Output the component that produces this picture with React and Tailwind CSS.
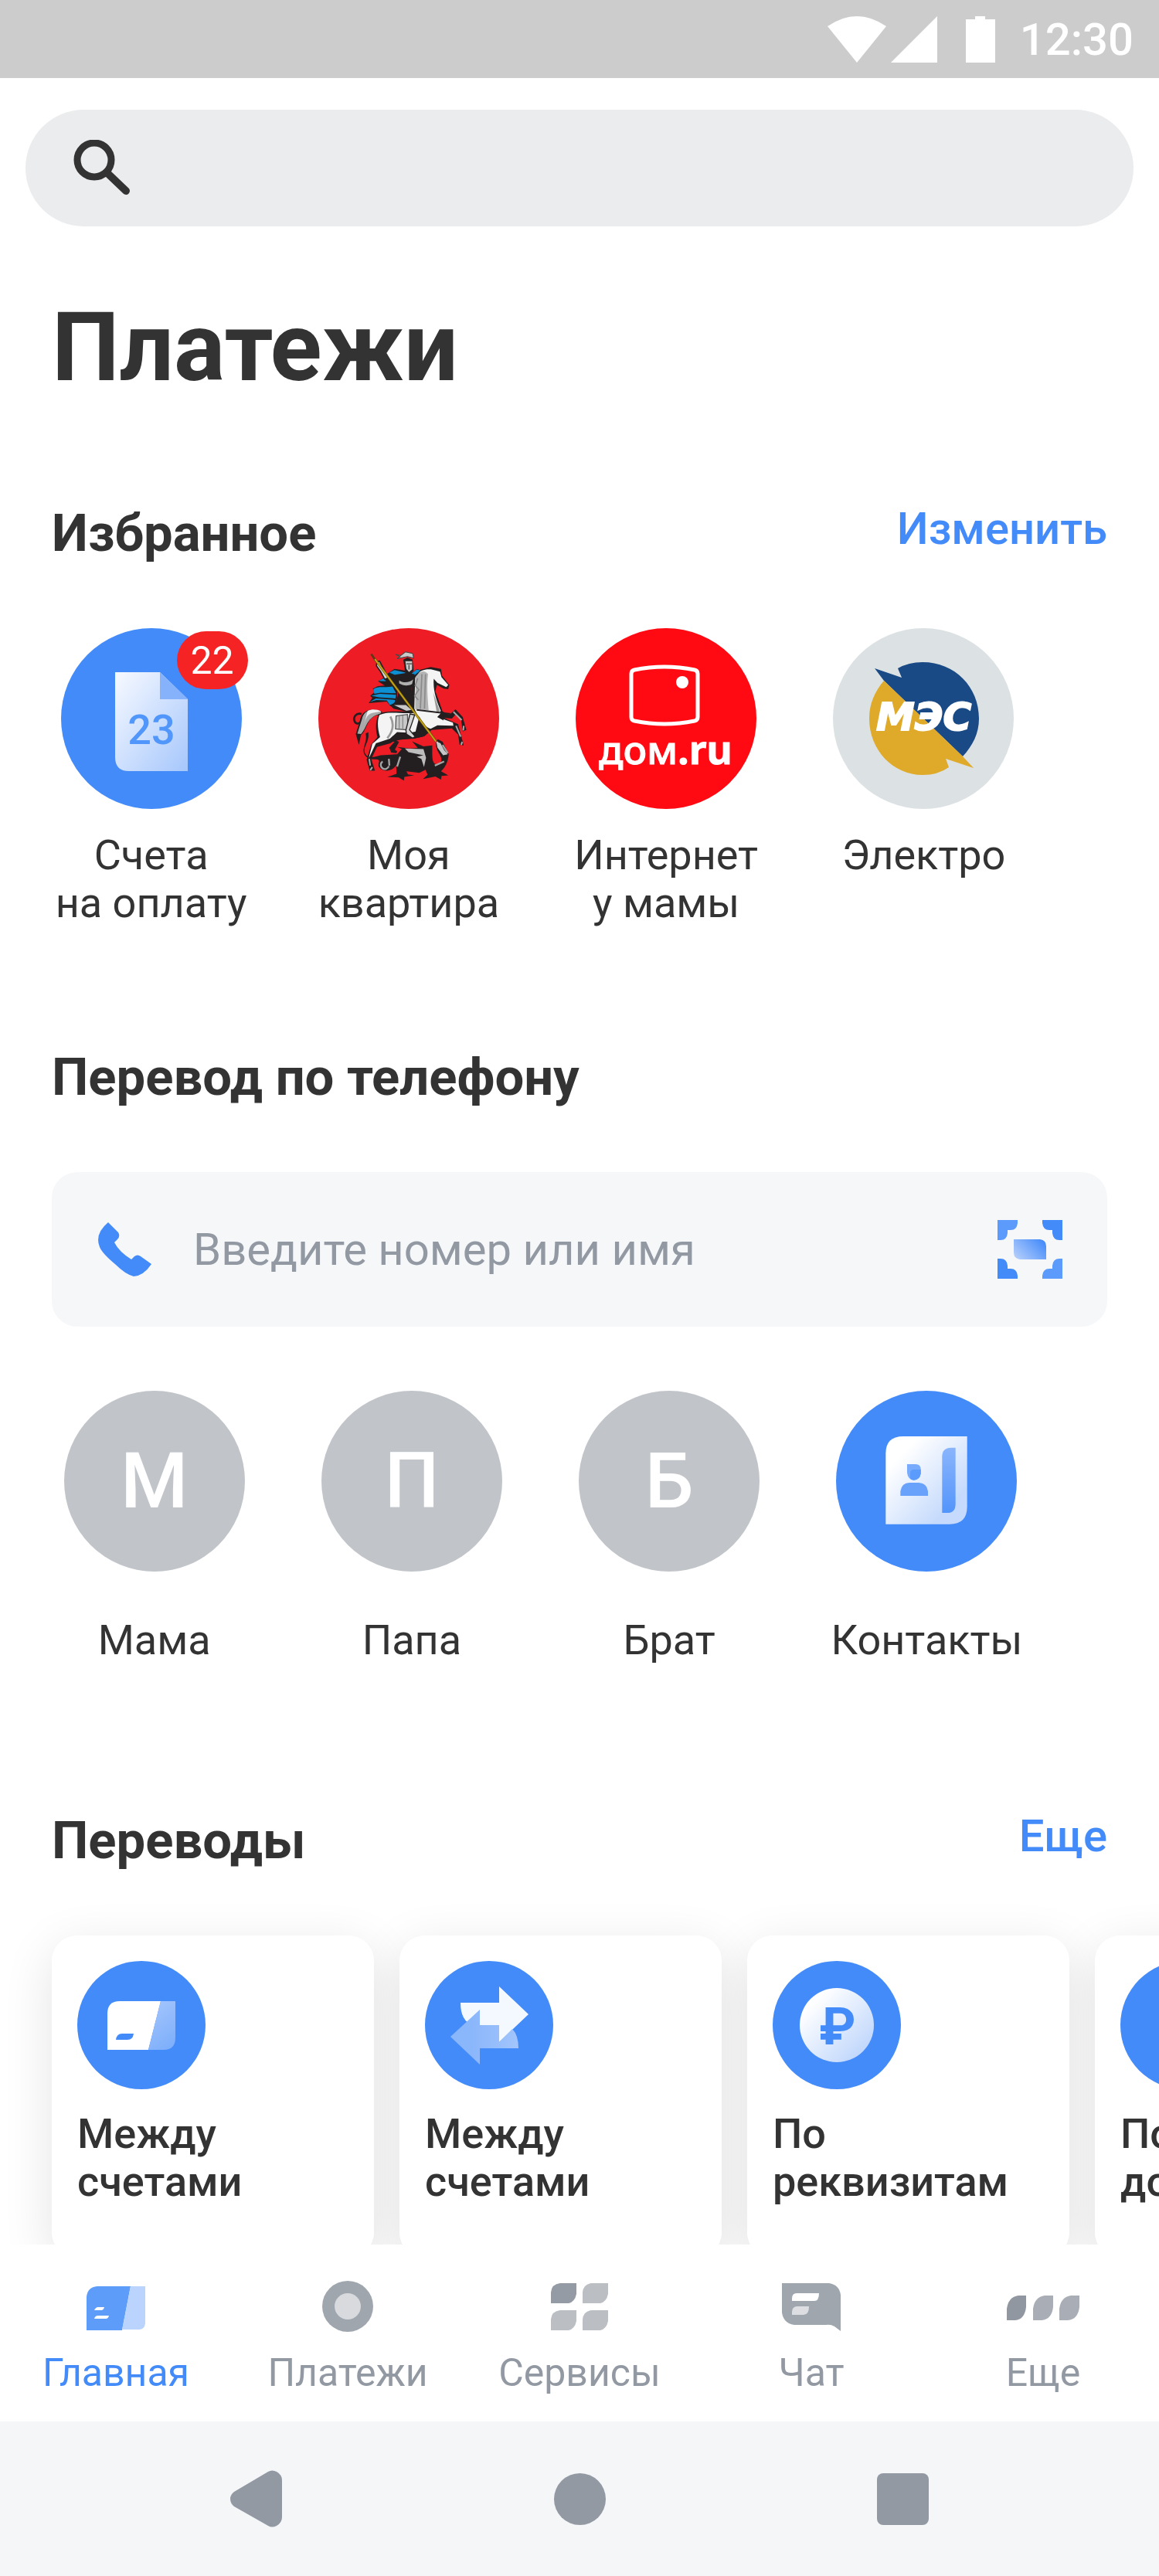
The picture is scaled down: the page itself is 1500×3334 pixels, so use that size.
import React from 'react';

// Цветной круг с иконкой внутри
function Circle({ className, children }) {
  return (
    <span className={`relative flex size-[234px] items-center justify-center rounded-full ${className}`}>
      {children}
    </span>
  );
}

function BillsIcon() {
  return (
    <svg className="size-full" viewBox="0 0 234 234" aria-hidden="true">
      <defs>
        <linearGradient id="bill" x1="0" y1="0" x2="1" y2="1">
          <stop offset="0.05" stopColor="#f3f7ff" />
          <stop offset="1" stopColor="#a6c7fc" />
        </linearGradient>
      </defs>
      <path d="M70 57H128L164 92V185H88Q70 185 70 167Z" fill="url(#bill)" />
      <path d="M128 57L164 92H128Z" fill="#86b2fb" />
      <text x="117" y="150" textAnchor="middle" className="fill-[#5196fb] font-['Roboto',sans-serif] text-[54px] font-medium">23</text>
    </svg>
  );
}

// Герб Москвы
function MoscowIcon() {
  return (
    <svg className="size-full" viewBox="39 68 700 700" aria-hidden="true">
      {/* змей */}
      <path d="M232 470C240 510 205 530 222 556C232 574 262 566 280 560L344 556L362 536L345 528L392 534L424 532L402 506L446 526L480 522C480 560 478 588 492 594C512 596 524 580 508 556C492 530 490 512 502 498L520 508L544 556C540 590 530 606 514 622L542 638L516 640L514 654L492 642L444 652L462 636L454 616L430 628L380 622L386 634L410 638L372 644L370 658L350 646L306 644L342 632L340 600C318 630 276 622 272 600C272 584 282 578 262 576C228 578 212 560 214 538C218 514 228 500 222 476Z" fill="#231f20" />
      <path d="M374 534L446 536L456 570L448 606L438 574L420 566L446 560L388 548Z" fill="#bdbdbd" />
      <path d="M356 566L344 604M312 574L314 600M288 584A16 16 0 1 0 312 602M520 520L540 552M498 508L512 536M490 600L526 584" fill="none" stroke="#a5a5a5" strokeWidth="7" />
      <path d="M496 506L512 514L526 540L540 556L522 560L500 530Z" fill="#c7c7c7" />
      {/* хвост и задние ноги */}
      <path d="M206 400C186 394 172 412 180 430C186 440 198 440 202 430" fill="none" stroke="#231f20" strokeWidth="8" />
      <path d="M286 392C240 372 206 388 200 426L184 478L196 520L204 482C230 462 226 400 286 404Z" fill="#231f20" />
      <path d="M282 391C240 377 214 390 208 420L190 476L204 478C228 454 224 410 282 399Z" fill="#a9a9a9" />
      <path d="M230 388C246 380 266 382 282 390L248 396C228 400 222 420 216 440Z" fill="#f2f2f2" />
      <path d="M324 498L346 510L330 540L342 548L324 546L318 532L336 512" fill="#231f20" stroke="#231f20" strokeWidth="8" />
      {/* корпус коня */}
      <path d="M272 402C300 384 350 394 396 388L400 300C398 262 410 232 446 226L474 218L514 226L518 252L546 288L542 304L524 302L498 288L492 312L520 390L546 404L570 382L598 412L612 462L598 468L592 424L572 400L556 418L526 416L580 440L602 522L586 520L580 480L556 456L478 462L450 486C400 502 344 492 318 514L266 528L244 574L258 620L238 620L226 578L244 518L268 490C258 456 262 424 272 402Z" fill="#231f20" />
      <path d="M276 404C310 388 350 400 410 396L414 260C424 232 452 226 478 228L510 236L516 258L542 288L534 296L500 280L486 264C482 306 496 350 516 394L500 412L560 434L562 446L500 444L474 458C452 452 436 428 430 410L414 474L344 470L316 496L262 514L244 552L234 572L248 516L278 490C266 450 268 420 276 404Z" fill="#f4f4f4" />
      <path d="M416 250C440 230 452 232 464 246C458 280 462 340 466 386L414 382Z" fill="#b4b4b4" />
      <path d="M424 262L414 290L428 306L412 330L426 346M440 246L434 380M454 246L450 380" fill="none" stroke="#8a8a8a" strokeWidth="5" />
      <path d="M484 318L510 390L498 398Z" fill="#9a9a9a" />
      <path d="M514 388L520 420L502 410M420 384L550 400" fill="none" stroke="#231f20" strokeWidth="6" />
      <path d="M340 408L384 402L386 462L338 458Z" fill="#c9c9c9" stroke="#555" strokeWidth="4" />
      <path d="M352 408V456M366 406V458" stroke="#8a8a8a" strokeWidth="4" />
      <path d="M318 410C334 440 326 470 306 494" fill="none" stroke="#9a9a9a" strokeWidth="8" />
      <path d="M340 476C380 480 420 464 462 462L450 486L410 496L330 500Z" fill="#231f20" />
      <path d="M236 574L240 600M248 606L240 618M562 392L594 424M602 446L600 464M572 446L590 488M596 508L592 520" fill="none" stroke="#a9a9a9" strokeWidth="6" />
      {/* плащ */}
      <path d="M312 240L334 226L374 232L408 238L420 226L436 232L412 260L380 256L350 260L342 362L318 370L304 352L234 358L248 338L240 330L256 316L250 302L270 292L296 290L270 274L290 262Z" fill="#231f20" />
      <path d="M314 240L334 230L376 240L372 250L338 250Z" fill="#0d8fd4" />
      <path d="M400 244L420 228L434 232L412 250Z" fill="#0d8fd4" />
      <path d="M272 272L294 262L300 274Z" fill="#0d8fd4" />
      <path d="M252 304C272 290 300 300 326 294L340 320L280 318L256 322Z" fill="#0d8fd4" />
      <path d="M244 330L276 322L340 326L338 340L274 336Z" fill="#0d8fd4" />
      <path d="M238 354L262 340L336 346L334 358L316 366L304 348L264 346Z" fill="#0d8fd4" />
      {/* всадник */}
      <path d="M336 248L374 242L412 246L400 300L406 370L420 400L404 396L330 380L318 368L342 350L350 310Z" fill="#231f20" />
      <path d="M352 270C370 284 396 276 406 266L402 284C384 294 366 290 352 282Z" fill="#b0b0b0" />
      <path d="M332 366L378 366L400 384L380 388Z" fill="#c9c9c9" />
      <path d="M394 400L412 404L400 440L392 462L414 488L404 494L380 478L378 462Z" fill="#d5d5d5" stroke="#231f20" strokeWidth="4" />
      <path d="M368 190L384 182L404 190L408 234L392 242L374 232Z" fill="#231f20" />
      <path d="M376 196H402V228L390 238L380 226Z" fill="#c9c9c9" />
      <path d="M380 206H402M390 210V228" stroke="#444" strokeWidth="4" />
      <path d="M338 170L358 174L376 160L404 166L408 184L384 178L344 186L356 178Z" fill="#c9c9c9" stroke="#444" strokeWidth="3" />
      <path d="M266 198L276 196L310 260L296 266L280 236L264 214Z" fill="#d5d5d5" stroke="#231f20" strokeWidth="5" />
      {/* копьё */}
      <path d="M244 168L262 196" stroke="#5c3a12" strokeWidth="8" />
      <path d="M258 188L494 506" stroke="#6e5a12" strokeWidth="9" />
      <path d="M258 188L494 506" stroke="#c9a711" strokeWidth="5" />
    </svg>
  );
}

function DomRuIcon() {
  return (
    <svg className="size-full" viewBox="0 0 234 234" aria-hidden="true">
      <path d="M76 54Q115 46 154 54Q158 55 158 59V115Q158 119 154 120Q115 128 76 120Q72 119 72 115V59Q72 55 76 54Z" fill="none" stroke="#fff" strokeWidth="5" />
      <circle cx="138" cy="70" r="8" fill="#fff" />
      <text x="30" y="176" stroke="#fff" strokeWidth="1" className="fill-white font-['Noto_Sans',sans-serif] text-[51px] font-medium">
        дом<tspan className="font-bold">.ru</tspan>
      </text>
    </svg>
  );
}

function MesIcon() {
  return (
    <svg className="size-full" viewBox="0 0 234 234" aria-hidden="true">
      <path d="M54 52L89 64L84 52Q98 44 116 44C158 44 189 76 189 117C189 136 181 152 168 166L66 68Z" fill="#194a86" />
      <path d="M66 68L168 166L182 181L146 169L150 180Q136 190 116 190C78 190 47 158 47 117C47 98 54 82 66 68Z" fill="#dfaa2a" />
      <text x="56" y="132" stroke="#fff" strokeWidth="2" className="fill-white font-['DejaVu_Sans',sans-serif] text-[50px] font-bold italic">МЭС</text>
    </svg>
  );
}

function ContactsIcon() {
  return (
    <svg className="size-full" viewBox="69 60 702 702" aria-hidden="true">
      <defs>
        <linearGradient id="book" x1="0.1" y1="0.15" x2="0.85" y2="0.9">
          <stop offset="0.1" stopColor="#fff" />
          <stop offset="0.9" stopColor="#c5dafc" />
        </linearGradient>
        <linearGradient id="spine" x1="0" y1="0" x2="0" y2="1">
          <stop offset="0" stopColor="#8ab5fc" />
          <stop offset="1" stopColor="#5395fb" />
        </linearGradient>
      </defs>
      <path d="M262 578V304Q262 237 330 237H578V510Q578 578 510 578Z" fill="url(#book)" />
      <path d="M481 534V316Q481 281 516 281H533V500Q533 534 500 534Z" fill="url(#spine)" />
      <path d="M345 345H378Q398 345 398 365V382Q394 407 371 407Q348 405 345 378Z" fill="#78abfb" />
      <path d="M357 402V380Q357 366 372 366H398V382Q394 407 371 407Q363 407 357 402Z" fill="#5b9bfb" />
      <path d="M319 468V450Q324 418 354 417H391Q422 419 426 450V468Z" fill="#69a2fb" />
    </svg>
  );
}

function PhoneIcon() {
  return (
    <svg className="h-[70px] w-[70px] shrink-0" viewBox="0 0 70 70" fill="#448bfa" aria-hidden="true">
      <path d="M14 0L27 13Q30 18 26 22L22 26Q28 38 44 48L48 44Q52 41 56 44L70 54Q60 69 47 70Q36 67 24 55Q6 40 3 32Q-4 15 14 0Z" />
    </svg>
  );
}

function ScanIcon() {
  return (
    <svg className="h-[76px] w-[84px]" viewBox="0 0 84 76" aria-hidden="true">
      <defs>
        <linearGradient id="scan" x1="0" y1="0.8" x2="1" y2="0.2">
          <stop offset="0" stopColor="#b2cdfb" />
          <stop offset="1" stopColor="#448bfa" />
        </linearGradient>
      </defs>
      <path d="M0 0H26V4Q25 13 17 13H13V17Q12 26 4 26H0Z" fill="#5c9bfb" />
      <path d="M84 0H58V4Q59 13 67 13H71V17Q72 26 80 26H84Z" fill="#448bfa" />
      <path d="M0 76H26V72Q25 63 17 63H13V59Q12 50 4 50H0Z" fill="#448bfa" />
      <path d="M84 76H58V72Q59 63 67 63H71V59Q72 50 80 50H84Z" fill="#5c9bfb" />
      <path d="M21 25H55Q63 26 63 34V51H29Q21 50 21 42Z" fill="url(#scan)" />
    </svg>
  );
}

function CardIcon() {
  return (
    <svg className="size-[167px]" viewBox="0 0 167 167" aria-hidden="true">
      <defs>
        <linearGradient id="stripe" x1="0.3" y1="0" x2="0.7" y2="1">
          <stop offset="0" stopColor="#a2c4fc" />
          <stop offset="1" stopColor="#7eaffb" />
        </linearGradient>
      </defs>
      <circle cx="83" cy="83" r="83" fill="#448bfa" />
      <path d="M39 115V68Q39 52 55 52H108L92 115Z" fill="#fff" />
      <path d="M108 52H127V99Q127 115 112 115H92Z" fill="url(#stripe)" />
      <path d="M50 102Q51 94 58 94H73Q72 102 65 102Z" fill="#448bfa" />
    </svg>
  );
}

function ArrowsIcon() {
  return (
    <svg className="size-[167px]" viewBox="0 0 167 167" aria-hidden="true">
      <defs>
        <linearGradient id="back" x1="0" y1="0" x2="1" y2="0">
          <stop offset="0.3" stopColor="#8ab6fb" />
          <stop offset="1" stopColor="#a2c5fc" />
        </linearGradient>
      </defs>
      <circle cx="83" cy="83" r="83" fill="#448bfa" />
      <path d="M46 54H96V33L134 69L96 105V83H62Q46 78 46 54Z" fill="#f4f8ff" />
      <path d="M33 98L71 63V83H96V105L113 88Q121 96 121 113H71V134Z" fill="url(#back)" />
    </svg>
  );
}

function RubleIcon() {
  return (
    <svg className="size-[167px]" viewBox="0 0 167 167" aria-hidden="true">
      <defs>
        <linearGradient id="coin" x1="0.1" y1="0.1" x2="0.9" y2="0.9">
          <stop offset="0.1" stopColor="#fff" />
          <stop offset="1" stopColor="#bdd5fc" />
        </linearGradient>
      </defs>
      <circle cx="83" cy="83" r="83" fill="#448bfa" />
      <circle cx="83" cy="83" r="48" fill="url(#coin)" />
      <text x="84" y="108" textAnchor="middle" className="fill-[#448bfa] font-['Roboto',sans-serif] text-[67px] font-bold">₽</text>
    </svg>
  );
}

function ContractIcon() {
  return (
    <svg className="size-[167px]" viewBox="0 0 167 167" aria-hidden="true">
      <circle cx="83" cy="83" r="83" fill="#448bfa" />
      <path d="M56 44H96L114 62V123H66Q56 123 56 113Z" fill="#f4f8ff" />
      <path d="M96 44L114 62H96Z" fill="#86b2fb" />
    </svg>
  );
}

const favorites = [
  { lines: ['Счета', 'на оплату'], color: 'bg-[#448bfa]', icon: <BillsIcon />, badge: 22 },
  { lines: ['Моя', 'квартира'], color: 'bg-[#ee1c25]', icon: <MoscowIcon /> },
  { lines: ['Интернет', 'у мамы'], color: 'bg-[#ff0a12]', icon: <DomRuIcon /> },
  { lines: ['Электро'], color: 'bg-[#dce1e3]', icon: <MesIcon /> },
];

const people = [
  { name: 'Мама', letter: 'М' },
  { name: 'Папа', letter: 'П' },
  { name: 'Брат', letter: 'Б' },
];

const transfers = [
  { lines: ['Между', 'счетами'], icon: <CardIcon /> },
  { lines: ['Между', 'счетами'], icon: <ArrowsIcon /> },
  { lines: ['По', 'реквизитам'], icon: <RubleIcon /> },
  { lines: ['По', 'договору'], icon: <ContractIcon /> },
];

const tabs = [
  {
    name: 'Главная',
    active: true,
    icon: (
      <>
        <path d="M12 65V22Q13 9 26 8H69L58 65Z" fill="#5e9cfa" />
        <path d="M69 8H88V56Q87 64 80 64H58Z" fill="#bad4fd" />
        <path d="M22 39Q24 35 27 35H35Q34 39 31 39ZM22 50Q23 46 27 46H41Q40 50 37 50Z" fill="#fff" />
      </>
    ),
  },
  {
    name: 'Платежи',
    icon: (
      <>
        <circle cx="50" cy="34" r="33" fill="#9fa6ae" />
        <circle cx="50" cy="34" r="17" fill="#d8dade" />
      </>
    ),
  },
  {
    name: 'Сервисы',
    icon: (
      <>
        <path d="M13 30V16Q14 5 25 4H46V18Q44 28 36 30Z" fill="#949ba4" />
        <path d="M54 30V16Q55 5 66 4H87V18Q85 28 77 30ZM13 65V51Q14 40 25 39H46V53Q44 63 36 65ZM54 65V51Q55 40 66 39H87V53Q85 63 77 65Z" fill="#bbbfc4" />
      </>
    ),
  },
  {
    name: 'Чат',
    icon: (
      <>
        <path d="M12 4H73Q86 6 88 19V66L80 60Q75 57 69 58H28Q14 56 12 42Z" fill="#9fa6ae" />
        <path d="M25 27V24Q25 17 31 17H60Q60 27 54 27Z" fill="#fff" />
        <path d="M25 45V41Q25 35 31 34H47Q47 45 40 45Z" fill="#dcdee2" />
      </>
    ),
  },
  {
    name: 'Еще',
    icon: (
      <>
        <path d="M3 52V37Q5 22 18 20H28V35Q26 51 14 52Z" fill="#9097a1" />
        <path d="M37 52V37Q39 22 52 20H63V35Q61 51 48 52ZM71 52V37Q73 22 86 20H97V35Q95 51 82 52Z" fill="#a9adb5" />
      </>
    ),
  },
];

function Label({ lines }) {
  return (
    <span className="text-[54px] leading-[62px]">
      {lines.map((line) => (
        <span key={line} className="block">{line}</span>
      ))}
    </span>
  );
}

function SectionHeader({ title, link }) {
  return (
    <div className="flex items-start justify-between px-[67px]">
      <h2 className="text-[67px] leading-[80px] font-bold">{title}</h2>
      {link && (
        <a href="#" className="text-[58px] leading-[68px] font-medium text-[#448bfa]">{link}</a>
      )}
    </div>
  );
}

function StatusBar() {
  return (
    <header className="flex h-[101px] items-center justify-end bg-[#cccccc] pr-[33px] text-white">
      <svg className="h-[60px] w-[220px]" viewBox="0 0 220 60" fill="currentColor" aria-hidden="true">
        <path d="M0 13Q38 -13 76 13L38 60Z" />
        <path d="M142 0V60H82Z" />
        <path d="M191 0H204V4H217V60H179V4H191Z" />
      </svg>
      <span className="ml-[29px] text-[58px] leading-[68px] font-medium">12:30</span>
    </header>
  );
}

export default function App() {
  return (
    <div className="overflow-hidden bg-white font-['Roboto',sans-serif] text-[#333333]">
      <StatusBar />

      <main>
        {/* Поиск */}
        <label className="mx-[33px] mt-[41px] flex h-[151px] items-center rounded-full bg-[#ebecee] px-[62px]">
          <svg className="size-[73px] shrink-0" viewBox="0 0 73 73" fill="none" stroke="#333333" aria-hidden="true">
            <circle cx="27" cy="26" r="22" strokeWidth="9" />
            <path d="M46 45L68 66" strokeWidth="10" strokeLinecap="round" />
          </svg>
          <input type="search" aria-label="Поиск" className="ml-8 min-w-0 flex-1 bg-transparent text-[58px] outline-none" />
        </label>

        <h1 className="mt-[83px] px-[67px] text-[124px] leading-[148px] font-bold">Платежи</h1>

        {/* Избранное */}
        <section className="mt-[126px]">
          <SectionHeader title="Избранное" link="Изменить" />
          <div className="mt-[83px] grid min-h-[387px] grid-cols-4 items-start pr-[138px] pl-[29px]">
            {favorites.map((item) => (
              <button key={item.lines[0]} type="button" className="flex flex-col items-center gap-[29px]">
                <Circle className={item.color}>
                  {item.icon}
                  {item.badge && (
                    <span className="absolute top-1 -right-2 flex h-[75px] w-[92px] items-center justify-center rounded-full bg-[#f52323] text-[50px] leading-[58px] text-white">
                      {item.badge}
                    </span>
                  )}
                </Circle>
                <Label lines={item.lines} />
              </button>
            ))}
          </div>
        </section>

        {/* Перевод по телефону */}
        <section className="mt-[154px]">
          <SectionHeader title="Перевод по телефону" />
          <div className="mx-[67px] mt-[83px] flex h-[200px] items-center rounded-[33px] bg-[#f6f7f9] pr-[58px] pl-[59px]">
            <PhoneIcon />
            <input
              type="text"
              aria-label="Номер или имя"
              placeholder="Введите номер или имя"
              className="ml-[54px] h-[68px] min-w-0 flex-1 bg-transparent text-[58px] leading-[68px] outline-none placeholder:text-[#9299a3]"
            />
            <button type="button" aria-label="Сканировать">
              <ScanIcon />
            </button>
          </div>
          <div className="mt-[83px] grid grid-cols-4 pr-[134px] pl-[33px]">
            {people.map((person) => (
              <button key={person.name} type="button" className="flex flex-col items-center gap-[58px]">
                <Circle className="bg-[#c1c4c9]">
                  <span className="text-[100px] leading-[120px] font-medium text-white">{person.letter}</span>
                </Circle>
                <Label lines={[person.name]} />
              </button>
            ))}
            <button type="button" className="flex flex-col items-center gap-[58px]">
              <Circle className="bg-[#448bfa]">
                <ContactsIcon />
              </Circle>
              <Label lines={['Контакты']} />
            </button>
          </div>
        </section>

        {/* Переводы */}
        <section className="mt-[188px]">
          <SectionHeader title="Переводы" link="Еще" />
          <div className="isolate flex gap-[33px] overflow-hidden pt-[83px] pl-[67px]">
            {transfers.map((item, index) => (
              <button
                key={index}
                type="button"
                className="relative flex h-[417px] w-[417px] shrink-0 flex-col items-start rounded-[33px] bg-white px-[33px] pt-[33px] text-left before:absolute before:inset-0 before:-z-10 before:rounded-[33px] before:shadow-[0_16px_66px_rgba(0,0,0,0.11)]"
              >
                {item.icon}
                <span className="mt-[26px] text-[54px] leading-[62px] font-medium">
                  {item.lines[0]}
                  <br />
                  {item.lines[1]}
                </span>
              </button>
            ))}
          </div>
        </section>
      </main>

      {/* Нижнее меню перекрывает край карточек */}
      <nav className="relative -mt-[17px] grid grid-cols-5 bg-white pt-[46px] pb-[34px]">
        {tabs.map((tab) => (
          <a
            key={tab.name}
            href="#"
            className={`flex flex-col items-center gap-[23px] text-[50px] leading-[58px] ${tab.active ? 'text-[#448bfa]' : 'text-[#9299a3]'}`}
          >
            <svg className="h-[68px] w-[100px]" viewBox="0 0 100 68" aria-hidden="true">
              {tab.icon}
            </svg>
            {tab.name}
          </a>
        ))}
      </nav>

      {/* Системные кнопки */}
      <footer className="flex h-[200px] items-center justify-between bg-[#f5f6f8] px-[298px] text-[#9299a3]">
        <button type="button" aria-label="Назад">
          <svg className="h-[74px] w-[67px]" viewBox="0 0 67 74" fill="currentColor" aria-hidden="true">
            <path d="M5 28L49 2Q54 -1 60 2Q67 6 67 13V61Q67 68 60 72Q54 75 49 72L5 47Q0 43 0 37Q0 32 5 28Z" />
          </svg>
        </button>
        <button type="button" aria-label="Домой" className="size-[67px] rounded-full bg-[#9299a3]" />
        <button type="button" aria-label="Недавние" className="size-[67px] rounded-lg bg-[#9299a3]" />
      </footer>
    </div>
  );
}
